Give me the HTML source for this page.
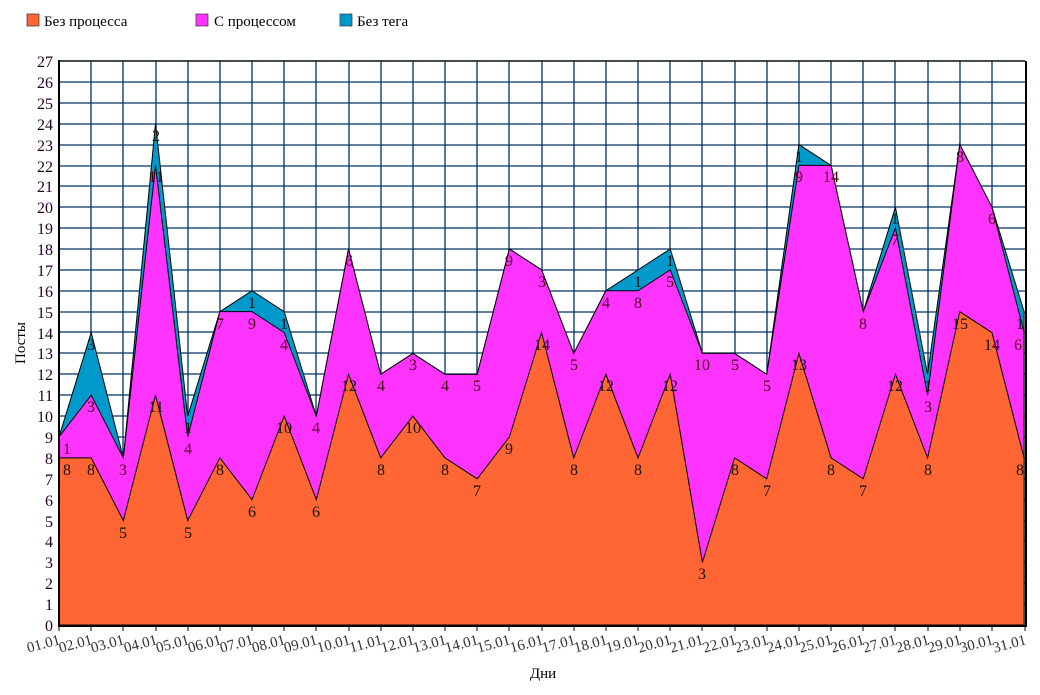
<!DOCTYPE html>
<html><head><meta charset="utf-8"><style>
html,body{margin:0;padding:0;background:#fff;}
svg{display:block;font-family:"Liberation Serif",serif;}
</style></head><body>
<svg width="1040" height="695" viewBox="0 0 1040 695" xmlns="http://www.w3.org/2000/svg">
<!-- legend -->
<rect x="27" y="14" width="12" height="12" fill="#ff6633" stroke="#333" stroke-width="0.7"/>
<text x="44" y="26" font-size="15">Без процесса</text>
<rect x="196" y="14" width="12" height="12" fill="#ff33ff" stroke="#333" stroke-width="0.7"/>
<text x="214" y="26" font-size="15">С процессом</text>
<rect x="340" y="14" width="12" height="12" fill="#0099cc" stroke="#333" stroke-width="0.7"/>
<text x="357" y="26" font-size="15">Без тега</text>

<!-- grid -->
<g stroke="#003366" stroke-width="1.3">
<path d="M59 61H1025M59 82H1025M59 103H1025M59 124H1025M59 145H1025M59 166H1025M59 186H1025M59 207H1025M59 228H1025M59 249H1025M59 270H1025M59 291H1025M59 312H1025M59 332H1025M59 353H1025M59 374H1025M59 395H1025M59 416H1025M59 437H1025M59 458H1025M59 479H1025M59 500H1025M59 521H1025M59 541H1025M59 562H1025M59 583H1025M59 604H1025"/>
<path d="M91 61V625M123 61V625M156 61V625M188 61V625M220 61V625M252 61V625M284 61V625M316 61V625M349 61V625M381 61V625M413 61V625M445 61V625M477 61V625M509 61V625M542 61V625M574 61V625M606 61V625M638 61V625M670 61V625M702 61V625M735 61V625M767 61V625M799 61V625M831 61V625M863 61V625M895 61V625M928 61V625M960 61V625M992 61V625"/>
</g>

<!-- areas -->
<g transform="translate(59,625) scale(32.17,-20.89)" stroke="#000" stroke-width="1" stroke-linejoin="miter">
<polygon vector-effect="non-scaling-stroke" fill="#0099cc" points="0,9 1,14 2,8 3,24 4,10 5,15 6,16 7,15 8,10 9,18 10,12 11,13 12,12 13,12 14,18 15,17 16,13 17,16 18,17 19,18 20,13 21,13 22,12 23,23 24,22 25,15 26,20 27,12 28,23 29,20 30,15 30,0 0,0"/>
<polygon vector-effect="non-scaling-stroke" fill="#ff33ff" points="0,9 1,11 2,8 3,22 4,9 5,15 6,15 7,14 8,10 9,18 10,12 11,13 12,12 13,12 14,18 15,17 16,13 17,16 18,16 19,17 20,13 21,13 22,12 23,22 24,22 25,15 26,19 27,11 28,23 29,20 30,14 30,0 0,0"/>
<polygon vector-effect="non-scaling-stroke" fill="#ff6633" points="0,8 1,8 2,5 3,11 4,5 5,8 6,6 7,10 8,6 9,12 10,8 11,10 12,8 13,7 14,9 15,14 16,8 17,12 18,8 19,12 20,3 21,8 22,7 23,13 24,8 25,7 26,12 27,8 28,15 29,14 30,8 30,0 0,0"/>
</g>

<!-- axes -->
<path d="M59 60V626H1026V61" stroke="#000" stroke-width="2" fill="none"/>
<path d="M59 61H1025" stroke="#000" stroke-width="1.3" fill="none"/>
<g stroke="#000" stroke-width="1">
<path d="M59 625v6M91 625v6M123 625v6M156 625v6M188 625v6M220 625v6M252 625v6M284 625v6M316 625v6M349 625v6M381 625v6M413 625v6M445 625v6M477 625v6M509 625v6M542 625v6M574 625v6M606 625v6M638 625v6M670 625v6M702 625v6M735 625v6M767 625v6M799 625v6M831 625v6M863 625v6M895 625v6M928 625v6M960 625v6M992 625v6M1025 625v6"/>
</g>

<!-- y labels -->
<g font-size="16" text-anchor="end" fill="#200020">
<text x="53" y="631">0</text><text x="53" y="610">1</text><text x="53" y="589">2</text><text x="53" y="568">3</text><text x="53" y="547">4</text><text x="53" y="527">5</text><text x="53" y="506">6</text><text x="53" y="485">7</text><text x="53" y="464">8</text><text x="53" y="443">9</text><text x="53" y="422">10</text><text x="53" y="401">11</text><text x="53" y="380">12</text><text x="53" y="359">13</text><text x="53" y="339">14</text><text x="53" y="318">15</text><text x="53" y="297">16</text><text x="53" y="276">17</text><text x="53" y="255">18</text><text x="53" y="234">19</text><text x="53" y="213">20</text><text x="53" y="192">21</text><text x="53" y="172">22</text><text x="53" y="151">23</text><text x="53" y="130">24</text><text x="53" y="109">25</text><text x="53" y="88">26</text><text x="53" y="67">27</text>
</g>

<!-- x labels -->
<g font-size="15" text-anchor="end" fill="#333">
<text transform="translate(61,644) rotate(-15)">01.01</text>
<text transform="translate(93,644) rotate(-15)">02.01</text>
<text transform="translate(125,644) rotate(-15)">03.01</text>
<text transform="translate(158,644) rotate(-15)">04.01</text>
<text transform="translate(190,644) rotate(-15)">05.01</text>
<text transform="translate(222,644) rotate(-15)">06.01</text>
<text transform="translate(254,644) rotate(-15)">07.01</text>
<text transform="translate(286,644) rotate(-15)">08.01</text>
<text transform="translate(318,644) rotate(-15)">09.01</text>
<text transform="translate(351,644) rotate(-15)">10.01</text>
<text transform="translate(383,644) rotate(-15)">11.01</text>
<text transform="translate(415,644) rotate(-15)">12.01</text>
<text transform="translate(447,644) rotate(-15)">13.01</text>
<text transform="translate(479,644) rotate(-15)">14.01</text>
<text transform="translate(511,644) rotate(-15)">15.01</text>
<text transform="translate(544,644) rotate(-15)">16.01</text>
<text transform="translate(576,644) rotate(-15)">17.01</text>
<text transform="translate(608,644) rotate(-15)">18.01</text>
<text transform="translate(640,644) rotate(-15)">19.01</text>
<text transform="translate(672,644) rotate(-15)">20.01</text>
<text transform="translate(704,644) rotate(-15)">21.01</text>
<text transform="translate(737,644) rotate(-15)">22.01</text>
<text transform="translate(769,644) rotate(-15)">23.01</text>
<text transform="translate(801,644) rotate(-15)">24.01</text>
<text transform="translate(833,644) rotate(-15)">25.01</text>
<text transform="translate(865,644) rotate(-15)">26.01</text>
<text transform="translate(897,644) rotate(-15)">27.01</text>
<text transform="translate(930,644) rotate(-15)">28.01</text>
<text transform="translate(962,644) rotate(-15)">29.01</text>
<text transform="translate(994,644) rotate(-15)">30.01</text>
<text transform="translate(1027,644) rotate(-15)">31.01</text>
</g>

<text x="543" y="678" font-size="15" text-anchor="middle">Дни</text>
<text transform="translate(25,343) rotate(-90)" font-size="15" text-anchor="middle">Посты</text>

<!-- orange value labels -->
<g font-size="16" text-anchor="middle" fill="#111">
<text x="67" y="475">8</text><text x="91" y="475">8</text><text x="123" y="538">5</text><text x="156" y="412">11</text><text x="188" y="538">5</text><text x="220" y="475">8</text><text x="252" y="517">6</text><text x="284" y="433">10</text><text x="316" y="517">6</text><text x="349" y="391">12</text><text x="381" y="475">8</text><text x="413" y="433">10</text><text x="445" y="475">8</text><text x="477" y="496">7</text><text x="509" y="454">9</text><text x="542" y="350">14</text><text x="574" y="475">8</text><text x="606" y="391">12</text><text x="638" y="475">8</text><text x="670" y="391">12</text><text x="702" y="579">3</text><text x="735" y="475">8</text><text x="767" y="496">7</text><text x="799" y="370">13</text><text x="831" y="475">8</text><text x="863" y="496">7</text><text x="895" y="391">12</text><text x="928" y="475">8</text><text x="960" y="329">15</text><text x="992" y="350">14</text><text x="1020" y="475">8</text>
</g>
<!-- magenta value labels -->
<g font-size="16" text-anchor="middle" fill="#4a0010">
<text x="67" y="454">1</text><text x="91" y="412">3</text><text x="123" y="475">3</text><text x="156" y="182">11</text><text x="188" y="454">4</text><text x="220" y="329">7</text><text x="252" y="329">9</text><text x="284" y="350">4</text><text x="316" y="433">4</text><text x="349" y="266">6</text><text x="381" y="391">4</text><text x="413" y="370">3</text><text x="445" y="391">4</text><text x="477" y="391">5</text><text x="509" y="266">9</text><text x="542" y="287">3</text><text x="574" y="370">5</text><text x="606" y="308">4</text><text x="638" y="308">8</text><text x="670" y="287">5</text><text x="702" y="370">10</text><text x="735" y="370">5</text><text x="767" y="391">5</text><text x="799" y="182">9</text><text x="831" y="182">14</text><text x="863" y="329">8</text><text x="895" y="245">7</text><text x="928" y="412">3</text><text x="960" y="162">8</text><text x="992" y="224">6</text><text x="1018" y="350">6</text>
</g>
<!-- blue value labels -->
<g font-size="16" text-anchor="middle" fill="#111">
<text x="91" y="350">3</text><text x="156" y="141">2</text><text x="188" y="433">1</text><text x="252" y="308">1</text><text x="284" y="329">1</text><text x="638" y="287">1</text><text x="670" y="266">1</text><text x="799" y="162">1</text><text x="895" y="224">1</text><text x="928" y="391">1</text><text x="1020" y="329">1</text>
</g>
</svg>
</body></html>
